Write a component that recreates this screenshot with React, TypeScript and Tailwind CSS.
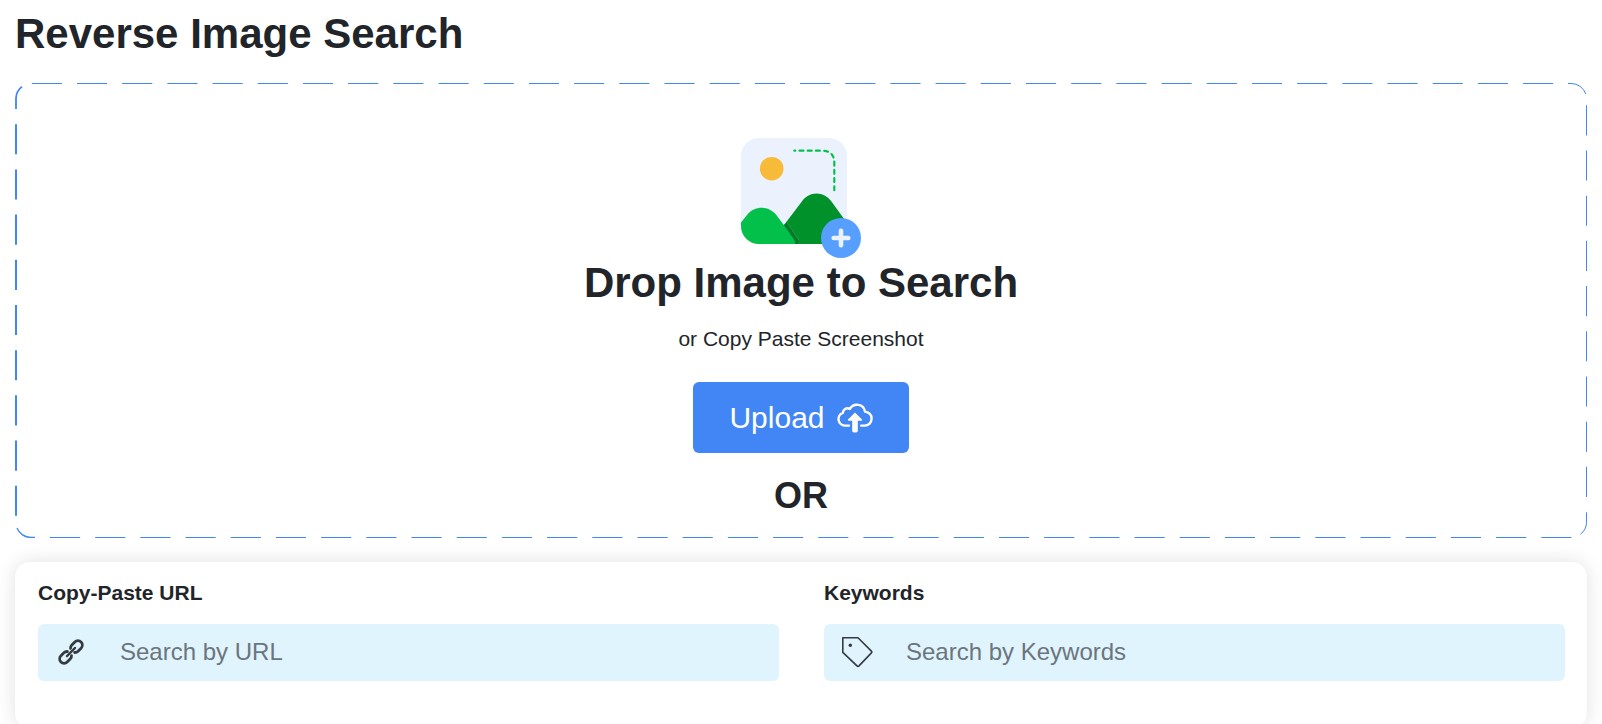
import { useRef, useState } from 'react';
import type { ReactNode } from 'react';

interface SearchFieldProps {
  id: string;
  label: string;
  placeholder: string;
  icon: ReactNode;
}

// Each edge is dashed on its own so the corners stay anchored when the area resizes
function DashedOutline() {
  return (
    <svg
      className="absolute inset-0 w-full h-full pointer-events-none"
      fill="none"
      stroke="#4285f4"
      aria-hidden="true"
    >
      <g strokeDasharray="30.12 15.07">
        <svg className="w-[calc(100%-27px)] h-full">
          <line x1="16.8" y1="0.5" x2="100%" y2="0.5" />
        </svg>
        <svg className="w-[calc(100%-15px)] h-full">
          <line x1="35" y1="100%" x2="100%" y2="100%" strokeWidth="2" />
        </svg>
        <svg className="w-full h-[calc(100%-22px)]">
          <line x1="1" y1="41.2" x2="1" y2="100%" strokeWidth="2" />
        </svg>
        <svg className="w-full h-[calc(100%-30px)]">
          <line x1="100%" y1="22.3" x2="100%" y2="100%" strokeWidth="2" />
        </svg>
      </g>
      <path d="M7 3.6A15 15 0 0 0 1 15V26" strokeWidth="1.8" />
      <svg x="100%" className="overflow-visible">
        <path d="M-19 0.5H-16A15.5 15.5 0 0 1 -1.2 11" />
      </svg>
      <svg x="100%" y="100%" className="overflow-visible">
        <path d="M-0.5 -25.7V-15.5A15 15 0 0 1 -6.5 -3.8" />
      </svg>
      <svg y="100%" className="overflow-visible">
        <path d="M20 -0.5H16A15 15 0 0 1 2 -10" strokeWidth="1.3" />
      </svg>
    </svg>
  );
}

function ImageIllustration() {
  return (
    <svg viewBox="0 0 120 120" className="w-[120px] h-[120px]" aria-hidden="true">
      <rect width="106" height="106" rx="18" fill="#ebf2fd" />
      <circle cx="30.7" cy="30.7" r="11.8" fill="#f8bb39" />
      <path
        d="M53.3 12.7H81Q93.3 12.7 93.3 25V54"
        fill="none"
        stroke="#06c24b"
        strokeWidth="2.2"
        strokeLinecap="round"
        strokeDasharray="4 4.2"
        strokeDashoffset="3"
      />
      <path d="M43 87L60.3 64.3C67.5 52.4 83.5 52.4 91 64.3L106 85V106H53.7Z" fill="#00912b" />
      <path d="M43 87L46.3 84.3L58 102L56.5 106H53L43 90Z" fill="#007a26" />
      <path d="M46.3 84.8L58 102.3" stroke="#55b070" strokeWidth="0.5" />
      <path
        d="M0 84.5L6 77C13.5 67.3 28 67.3 35.3 77L43 87.3L53 101.5Q54.6 104 54 106H18A18 18 0 0 1 0 88Z"
        fill="#03c04a"
      />
      <circle cx="100" cy="100" r="20" fill="#579ffe" />
      <path d="M92.7 100H107.3M100 92.7V107.3" stroke="#ebf2fd" strokeWidth="4.6" strokeLinecap="round" />
    </svg>
  );
}

function CloudUploadIcon() {
  return (
    <svg viewBox="0 0 36 30" className="w-9 h-[30px]" aria-hidden="true">
      <path
        d="M12 22.6H7.8A6.6 6.6 0 0 1 5.9 9.8C5.9 6.5 9.5 4.3 12.8 5.9C16.3 -0.2 26.7 0.4 28 8.6C32.2 9.3 34.6 12 34.6 15.6C34.6 19.5 31.6 22.6 27.6 22.6H24.2"
        fill="none"
        stroke="currentColor"
        strokeWidth="2.4"
        strokeLinecap="round"
        strokeLinejoin="round"
      />
      <path
        d="M18 9.6L25 16.4Q25.6 17.8 24.2 17.8H20.8V27.8Q20.8 29.4 19.2 29.4H16.8Q15.2 29.4 15.2 27.8V17.8H11.8Q10.4 17.8 11 16.4Z"
        fill="currentColor"
      />
    </svg>
  );
}

function LinkIcon() {
  return (
    <svg viewBox="-16 -16 32 32" className="w-8 h-8" fill="none" stroke="#343a40" strokeWidth="2.8" aria-hidden="true">
      <g transform="rotate(-45)" strokeLinecap="round">
        <path d="M-2.2 -2.9Q-3.4 -4.4 -5.6 -4.4H-9.8A4.4 4.4 0 0 0 -9.8 4.4H-5.6Q-3.4 4.4 -2.2 2.9" />
        <path d="M2.2 -2.9Q3.4 -4.4 5.6 -4.4H9.8A4.4 4.4 0 0 1 9.8 4.4H5.6Q3.4 4.4 2.2 2.9" />
        <path d="M-5.8 0H5.8" strokeWidth="2.2" />
      </g>
    </svg>
  );
}

function TagIcon() {
  return (
    <svg viewBox="0 0 32 32" className="w-8 h-8" aria-hidden="true">
      <path
        d="M1.8 1.8H17L30.4 15.1Q31.2 16 30.4 16.9L18 29.9Q17 30.9 16 29.9L1.8 16.4Z"
        fill="none"
        stroke="#343a40"
        strokeWidth="1.6"
        strokeLinejoin="round"
      />
      <circle cx="9.3" cy="9.3" r="1.7" fill="#343a40" />
    </svg>
  );
}

function SearchField({ id, label, placeholder, icon }: SearchFieldProps) {
  const [value, setValue] = useState('');

  return (
    <div className="flex-1 min-w-0">
      <label htmlFor={id} className="block text-[21px] leading-8 font-bold">
        {label}
      </label>
      <div className="mt-[15px] h-[57px] pb-0.5 flex items-center rounded-md bg-[#e0f4fe]">
        <span className="ml-[17px] mr-[33px] shrink-0">{icon}</span>
        <input
          id={id}
          type="text"
          value={value}
          onChange={(e) => setValue(e.target.value)}
          placeholder={placeholder}
          className="flex-1 min-w-0 h-full pr-4 bg-transparent text-2xl placeholder:text-[#6c757d] focus:outline-none"
        />
      </div>
    </div>
  );
}

export default function App() {
  const fileRef = useRef<HTMLInputElement>(null);

  return (
    <main className="px-[15px] pt-[9px] bg-white text-[#212529] font-['Liberation_Sans',Arial,sans-serif]">
      <h1 className="text-[42px] leading-[50px] font-bold">Reverse Image Search</h1>

      <section className="relative mt-6 pt-[55px] pb-[21px] flex flex-col items-center">
        <DashedOutline />
        <ImageIllustration />
        <h2 className="text-[42px] leading-[50px] font-bold">Drop Image to Search</h2>
        <p className="mt-4 text-[21px] leading-[30px]">or Copy Paste Screenshot</p>

        <input ref={fileRef} type="file" accept="image/*" aria-label="Image file" className="hidden" />
        <button
          type="button"
          onClick={() => fileRef.current?.click()}
          className="mt-7 h-[71px] px-9 flex items-center gap-3 rounded-md bg-[#4285f4] text-white text-[30px] cursor-pointer"
        >
          Upload
          <CloudUploadIcon />
        </button>
        <p className="mt-[21px] text-[36px] leading-[43px] font-bold">OR</p>
      </section>

      <section className="mt-6 pl-[23px] pr-[22px] pt-[15px] pb-[47px] flex gap-[45px] rounded-[15px] bg-white shadow-[0_0_20px_rgba(0,0,0,0.12)]">
        <SearchField id="url" label="Copy-Paste URL" placeholder="Search by URL" icon={<LinkIcon />} />
        <SearchField id="keywords" label="Keywords" placeholder="Search by Keywords" icon={<TagIcon />} />
      </section>
    </main>
  );
}
